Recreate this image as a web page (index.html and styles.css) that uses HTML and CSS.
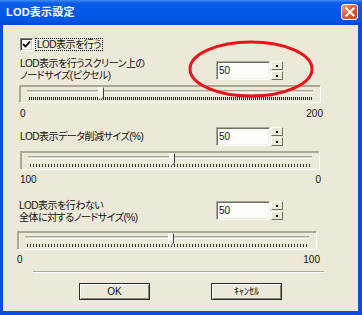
FILE: index.html
```html
<!DOCTYPE html>
<html lang="ja">
<head>
<meta charset="utf-8">
<title>LOD表示設定</title>
<link rel="stylesheet" href="styles.css">
</head>
<body>
<div class="window">
  <div class="titlebar">
    <span class="title">LOD表示設定</span>
    <span class="close"><svg width="10" height="10" viewBox="0 0 10 10"><path d="M1.5 1.5L8.5 8.5M8.5 1.5L1.5 8.5" stroke="#fff" stroke-width="2" stroke-linecap="square"/></svg></span>
  </div>
  <div class="frame">
    <div class="client">
      <div class="check-row">
        <span class="checkbox"><svg width="9" height="9" viewBox="0 0 9 9"><path d="M1 4L3.5 6.5L8 1.5" stroke="#000" stroke-width="1.8" fill="none"/></svg></span>
        <span class="check-label">LOD表示を行う</span>
      </div>

      <div class="head head-1">
        <div class="label"><div>LOD表示を行うスクリーン上の</div><div>ノードサイズ(ピクセル)</div></div>
        <div class="spin spin-1">
          <div class="edit">50</div>
          <div class="spin-btns"><span class="sbtn"><i></i></span><span class="sbtn"><i></i></span></div>
        </div>
      </div>
      <div class="slider slider-1">
        <div class="track"></div>
        <div class="ticks ticks-dense"></div>
        <span class="thumb" style="left:78px"><svg width="6" height="13" viewBox="0 0 6 13"><path d="M0.5 0.5H5.5V10L3 12.5L0.5 10Z" fill="#f4f3ee"/><path d="M0.5 10V0.5H5" stroke="#fff" fill="none"/><path d="M5.5 0.5V10L3 12.5" stroke="#404040" fill="none"/><path d="M0.5 10L3 12.5" stroke="#fff" fill="none"/></svg></span>
      </div>
      <div class="scale scale-1"><span>0</span><span>200</span></div>

      <div class="head head-2">
        <div class="label">LOD表示データ削減サイズ(%)</div>
        <div class="spin">
          <div class="edit">50</div>
          <div class="spin-btns"><span class="sbtn"><i></i></span><span class="sbtn"><i></i></span></div>
        </div>
      </div>
      <div class="slider slider-2">
        <div class="track"></div>
        <div class="ticks"></div>
        <span class="thumb" style="left:148px"><svg width="6" height="13" viewBox="0 0 6 13"><path d="M0.5 0.5H5.5V10L3 12.5L0.5 10Z" fill="#f4f3ee"/><path d="M0.5 10V0.5H5" stroke="#fff" fill="none"/><path d="M5.5 0.5V10L3 12.5" stroke="#404040" fill="none"/><path d="M0.5 10L3 12.5" stroke="#fff" fill="none"/></svg></span>
      </div>
      <div class="scale scale-2"><span>100</span><span>0</span></div>

      <div class="head head-3">
        <div class="label"><div>LOD表示を行わない</div><div>全体に対するノードサイズ(%)</div></div>
        <div class="spin spin-3">
          <div class="edit">50</div>
          <div class="spin-btns"><span class="sbtn"><i></i></span><span class="sbtn"><i></i></span></div>
        </div>
      </div>
      <div class="slider slider-3">
        <div class="track"></div>
        <div class="ticks"></div>
        <span class="thumb" style="left:150px"><svg width="6" height="13" viewBox="0 0 6 13"><path d="M0.5 0.5H5.5V10L3 12.5L0.5 10Z" fill="#f4f3ee"/><path d="M0.5 10V0.5H5" stroke="#fff" fill="none"/><path d="M5.5 0.5V10L3 12.5" stroke="#404040" fill="none"/><path d="M0.5 10L3 12.5" stroke="#fff" fill="none"/></svg></span>
      </div>
      <div class="scale scale-3"><span>0</span><span>100</span></div>

      <div class="sep"></div>
      <div class="buttons">
        <span class="btn">OK</span>
        <span class="btn">ｷｬﾝｾﾙ</span>
      </div>
    </div>
  </div>
  <svg class="mark" width="128" height="60" viewBox="0 0 128 60"><ellipse cx="63" cy="29" rx="61" ry="27" fill="none" stroke="#e8141b" stroke-width="3"/></svg>
</div>
</body>
</html>
```
FILE: styles.css
```css
* { box-sizing: border-box; }
html, body { margin: 0; padding: 0; }
body {
  width: 362px;
  height: 315px;
  overflow: hidden;
  font-family: "Liberation Sans", "Noto Sans CJK JP", sans-serif;
  font-size: 10px;
  line-height: 12px;
  letter-spacing: -0.5px;
  color: #111;
  font-feature-settings: "palt";
}
.window {
  position: relative;
  width: 362px;
  height: 315px;
  display: flex;
  flex-direction: column;
}
.titlebar {
  height: 25px;
  flex: none;
  display: flex;
  align-items: center;
  justify-content: space-between;
  padding: 0 4px 1px 6px;
  background: linear-gradient(to bottom, #3d8ffb 0, #0b5ce9 3px, #0458e7 12px, #0455e2 21px, #0046cf 25px);
}
.title {
  color: #fff;
  font-weight: bold;
  font-size: 11px;
  letter-spacing: 0.2px;
}
.close {
  width: 17px;
  height: 16px;
  border: 1px solid #fff;
  border-radius: 3px;
  background: linear-gradient(135deg, #f0a087 0, #e2603f 45%, #c8431c 100%);
  display: flex;
  align-items: center;
  justify-content: center;
}
.close svg { display: block; }
.frame {
  flex: 1;
  background: #0a4ddc;
  padding: 0 4px 4px 3px;
  display: flex;
}
.client {
  flex: 1;
  background: #ece9d8;
  display: flex;
  flex-direction: column;
  align-items: flex-start;
}
.check-row {
  margin: 13px 0 0 17px;
  height: 13px;
  display: flex;
  align-items: center;
  gap: 2px;
}
.checkbox {
  width: 13px;
  height: 13px;
  background: #fff;
  border: 1px solid;
  border-color: #808080 #fff #fff #808080;
  box-shadow: inset 1px 1px #404040, inset -1px -1px #d4d0c8;
  display: flex;
  align-items: center;
  justify-content: center;
}
.checkbox svg { display: block; }
.check-label {
  border: 1px dotted #000;
  height: 13px;
  padding: 0 1px;
  line-height: 11px;
}
.head {
  display: grid;
  grid-template-columns: 196px 67px;
  margin-left: 17px;
}
.head-1 { margin-top: 7px; height: 24px; }
.head-1 .spin { margin-top: 3px; }
.head-2 { margin-top: 7px; height: 19px; align-items: center; }
.head-3 { margin-top: 14px; height: 24px; margin-left: 16px; grid-template-columns: 197px 67px; }
.head-3 .spin { margin-top: 1px; }
.label { white-space: nowrap; }
.spin {
  display: flex;
  height: 19px;
  gap: 1px;
}
.edit {
  width: 54px;
  height: 19px;
  background: #fdfdf9;
  border: 1px solid;
  border-color: #aca899 #fff #fff #aca899;
  box-shadow: inset 1px 1px #716f64, inset -1px -1px #f1efe2;
  padding: 0 0 0 2px;
  line-height: 17px;
  letter-spacing: 0;
}
.spin-btns {
  display: flex;
  flex-direction: column;
  gap: 1px;
}
.sbtn {
  width: 12px;
  height: 9px;
  background: #ece9d8;
  border: 1px solid;
  border-color: #fff #716f64 #716f64 #fff;
  display: flex;
  align-items: center;
  justify-content: center;
}
.sbtn i {
  display: block;
  width: 2px;
  height: 2px;
  background: #000;
}
.slider {
  position: relative;
  height: 19px;
  border: 1px solid;
  border-color: #aca899 #fff #fff #aca899;
  box-shadow: 1px 1px 0 #aca899 inset;
}
.slider-1 { margin: 3px 0 0 16px; width: 302px; height: 18px; }
.slider-2 { margin: 5px 0 0 17px; width: 300px; }
.slider-3 { margin: 7px 0 0 14px; width: 300px; }
.track {
  margin: 4px 7px 0 7px;
  height: 3px;
  border-top: 1px solid #aca899;
  border-bottom: 1px solid #fff;
  background: #d8d4c4;
}
.ticks {
  margin: 5px 8px 0 9px;
  height: 3px;
  background: repeating-linear-gradient(to right, #3c3c3c 0, #3c3c3c 1px, transparent 1px, transparent 3px);
}
.ticks-dense {
  background: repeating-linear-gradient(to right, #2c2c2c 0, #2c2c2c 1px, transparent 1px, transparent 2px);
  margin-top: 4px;
}
.thumb {
  position: absolute;
  top: 1px;
  width: 6px;
  height: 13px;
}
.thumb svg { display: block; }
.scale {
  display: flex;
  justify-content: space-between;
  height: 12px;
  letter-spacing: 0;
}
.scale-1 { margin: 5px 0 0 17px; width: 303px; }
.scale-2 { margin: 4px 0 0 17px; width: 301px; }
.scale-3 { margin: 4px 0 0 14px; width: 303px; }
.sep {
  margin: 5px 0 0 30px;
  width: 291px;
  height: 2px;
  border-top: 1px solid #aca899;
  border-bottom: 1px solid #fff;
}
.buttons {
  margin: 10px 0 0 76px;
  display: flex;
  gap: 61px;
}
.btn {
  width: 71px;
  height: 17px;
  border: 1px solid #2b2b2b;
  background: #ece9d8;
  box-shadow: inset 1px 1px #fff, inset -1px -1px #8a8778;
  display: flex;
  align-items: center;
  justify-content: center;
  line-height: 12px;
  letter-spacing: 0;
}
.mark {
  position: absolute;
  left: 188px;
  top: 40px;
}
```
